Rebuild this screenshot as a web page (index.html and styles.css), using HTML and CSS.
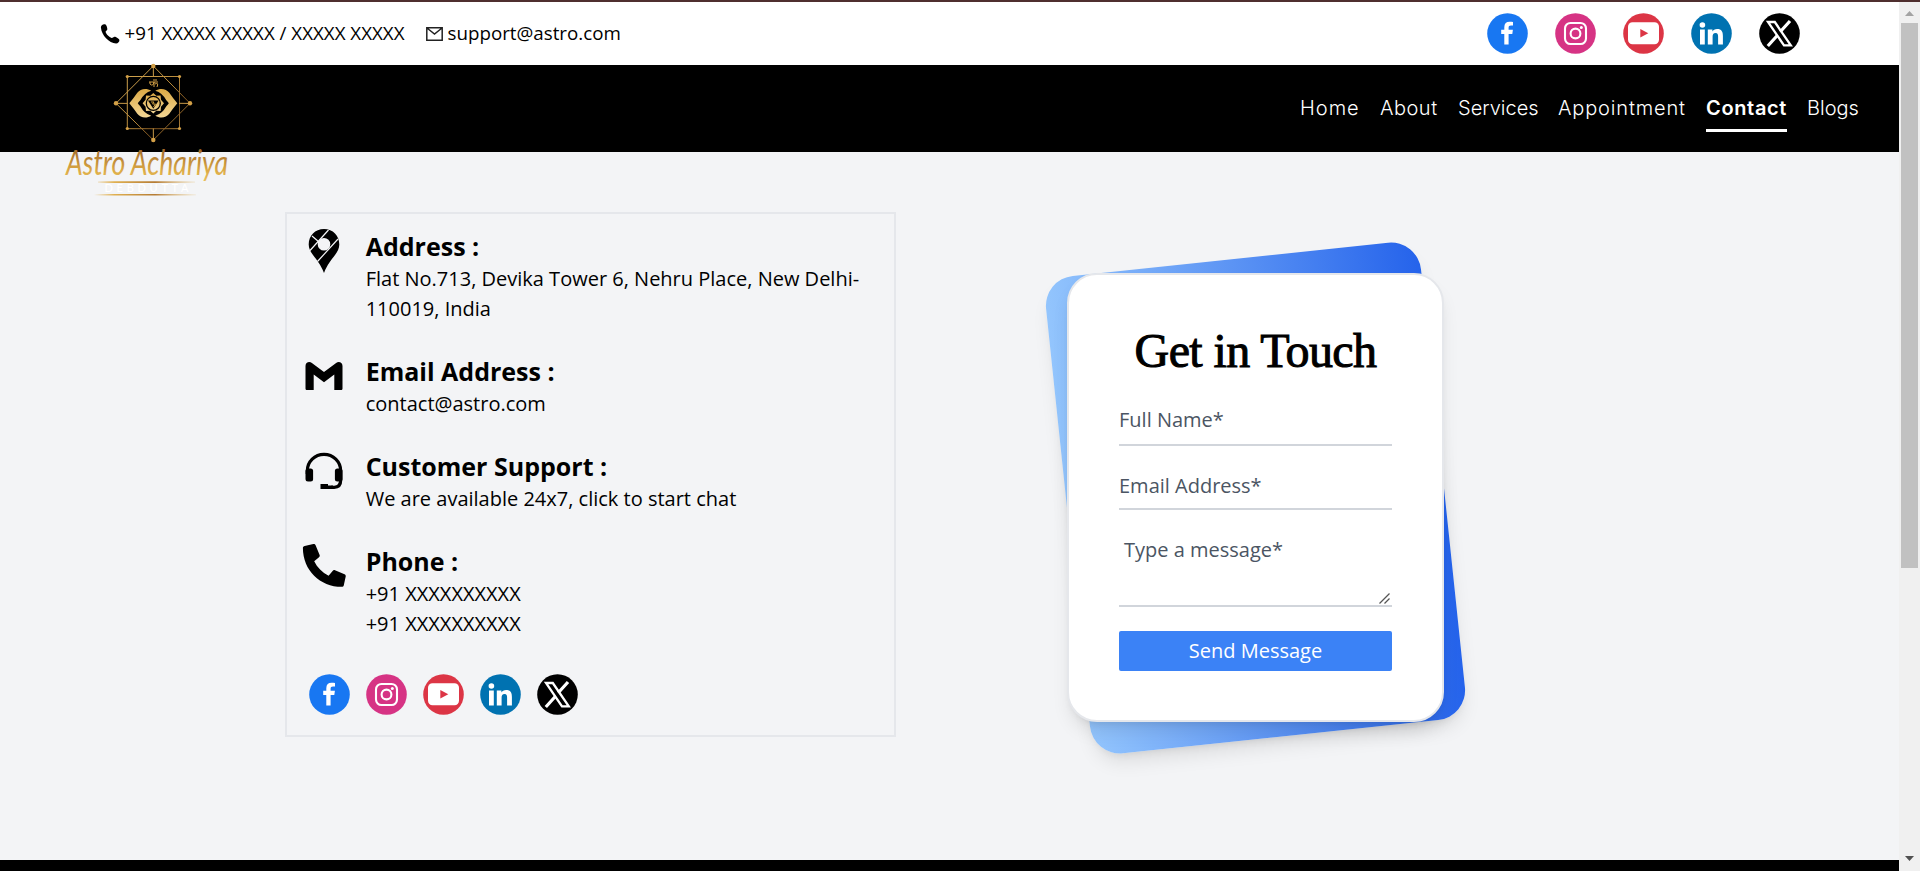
FILE: index.html
```html
<!DOCTYPE html>
<html lang="en">
<head>
<meta charset="utf-8">
<title>Contact - Astro Achariya</title>
<link rel="stylesheet" href="styles.css">
</head>
<body>
<svg class="defs" width="0" height="0">
  <symbol id="fb" viewBox="0 0 41 41"><circle cx="20.5" cy="20.5" r="20.3" fill="#1877f2"/><path d="M17.3 31.500V21h-3.100v-4.200h3.100v-2.600c0-3.600 2-5.400 5.200-5.400 1.400 0 2.500.1 3.500.3v3.500h-2c-1.700 0-2.400.8-2.400 2.200v2h4.300L25.300 21h-3.700v10.500z" fill="#fff"/></symbol>
  <symbol id="ig" viewBox="0 0 41 41"><circle cx="20.5" cy="20.5" r="20.3" fill="#d63384"/><g fill="none" stroke="#fff" stroke-width="2.1"><rect x="10" y="10" width="21" height="21" rx="5.5"/><circle cx="20.5" cy="20.5" r="4.9"/></g><circle cx="26.3" cy="14.6" r="1.5" fill="#fff"/></symbol>
  <symbol id="yt" viewBox="0 0 41 41"><circle cx="20.5" cy="20.5" r="20.3" fill="#dc3545"/><rect x="5" y="9.300" width="31" height="22" rx="4.500" fill="#fff"/><path d="M17.300 16v8.500l8-4.250z" fill="#dc3545"/></symbol>
  <symbol id="li" viewBox="0 0 41 41"><circle cx="20.5" cy="20.5" r="20.3" fill="#0072b1"/><g fill="#fff"><circle cx="11.400" cy="12" r="2.800"/><path d="M9 16.500h4.800v15H9zM16.800 16.500h4.600v2.100c.8-1.500 2.400-2.500 4.700-2.500 4.600 0 5.800 2.700 5.800 7v8.400h-4.800v-7.600c0-2-.2-3.900-2.500-3.900s-3 1.700-3 3.800v7.700h-4.800z"/></g></symbol>
  <symbol id="tx" viewBox="0 0 41 41"><circle cx="20.5" cy="20.5" r="20.3"/><path d="M9 9h6.800l16 23.400H25z" fill="none" stroke="#fff" stroke-width="2.300"/><path d="M31 8 21.300 18.800M18.500 22.200 8.800 33" stroke="#fff" stroke-width="3.200"/></symbol>
  <symbol id="phone" viewBox="0 0 44 44"><path d="M2.700 1.900 11.300.1c1-.2 1.900.3 2.300 1.200l4 9.600c.4.900.1 1.800-.6 2.400l-4.800 4c3 6.200 7.900 11.200 14.400 14.400l4-4.800c.6-.7 1.500-1 2.400-.6l9.500 4c.9.400 1.400 1.400 1.200 2.300l-1.900 8.600c-.2 1-1 1.600-2 1.600C18 42.800.9 26.200.9 3.900c0-1 .7-1.800 1.800-2z"/></symbol>
</svg>
<div class="accent"></div>
<div class="window">
  <div class="page">
    <div class="topbar">
      <div class="reach">
        <svg class="tel" viewBox="0 0 20 20"><path d="M1 4C.5 1.500 3 0 5 .2c1.500.2 2.600 4.300 2.300 5.300-.3 1.100-1.700 1.500-1.700 2.500.6 2.200 3.700 5.200 6 6 1 .2 1.800-1.200 2.900-1.300 1.500 0 4.700 2 4.900 3.200.3 1.500-1.500 3.500-3.300 3.500C9 19.400 1.500 11 1 4z"/></svg>
        <span class="tel-text">+91 XXXXX XXXXX / XXXXX XXXXX</span>
        <svg class="mail" viewBox="0 0 17 14"><path d="M.8.800h15.400v12.400H.8zM1 1l7.500 6L16 1" fill="none" stroke="#222" stroke-width="1.500"/></svg>
        <span class="mail-text">support@astro.com</span>
      </div>
      <div class="social">
        <svg><use href="#fb"/></svg><svg><use href="#ig"/></svg><svg><use href="#yt"/></svg><svg><use href="#li"/></svg><svg><use href="#tx"/></svg>
      </div>
    </div>
    <header class="nav">
      <svg class="logo" viewBox="60 60 180 140">
        <defs>
          <linearGradient id="gold" x1="0" y1="0" x2="0" y2="1"><stop offset="0" stop-color="#dba945"/><stop offset="1" stop-color="#f4d795"/></linearGradient>
          <linearGradient id="frame" x1="0" y1="0" x2="1" y2="1"><stop offset="0" stop-color="#d9ac55"/><stop offset=".5" stop-color="#b98b3c"/><stop offset=".7" stop-color="#80551f"/><stop offset="1" stop-color="#d9ac55"/></linearGradient>
          <linearGradient id="ink" gradientUnits="userSpaceOnUse" x1="0" y1="148" x2="0" y2="192"><stop offset="0" stop-color="#9c6428"/><stop offset=".5" stop-color="#dba945"/><stop offset=".75" stop-color="#e8bf5c"/><stop offset="1" stop-color="#f7ec9c"/></linearGradient>
          <linearGradient id="rule"><stop offset="0" stop-color="#e0b050" stop-opacity="0"/><stop offset=".2" stop-color="#e0b050"/><stop offset=".6" stop-color="#b57c35"/><stop offset="1" stop-color="#e0b050" stop-opacity=".1"/></linearGradient>
        </defs>
        <g fill="none" stroke="url(#frame)"><path d="M127.300 76.500h52.200v52.200h-52.200zM153.300 66 190 103.300 153.300 140 116 103.300z"/><path d="M116 103.300l11.500.1M179 103.300l11 .1M153.300 66l.1 10.500M153.300 128.500l.1 11.500" stroke="#c89a48"/></g>
        <g fill="#d3a047"><circle cx="153.300" cy="66" r="2.200"/><circle cx="153.300" cy="140" r="2.200"/><circle cx="116" cy="103.300" r="2.200"/><circle cx="190" cy="103.300" r="2.200"/><circle cx="127.300" cy="76.500" r="1.600"/><circle cx="179.500" cy="76.500" r="1.600"/><circle cx="127.300" cy="128.500" r="1.600"/><circle cx="179.500" cy="128.500" r="1.600"/></g>
        <path d="M149 82h9M150 82v2q3 3 4-2v5M155 84q4-2 2 3M153 80l4 0" fill="none" stroke="#d3a047"/>
        <path d="M129.300 103.300q5-6 8-10.500c3-4 9-5 14-2q-7 2-11 9.500-2 2-2.500 3 .5 1 2.500 3 4 7.500 11 9.500c-5 3-11 2-14-2q-3-4.500-8-10.500zM177.300 103.300q-5-6-8-10.500c-3-4-9-5-14-2q7 2 11 9.500 2 2 2.500 3-.5 1-2.500 3-4 7.500-11 9.500c5 3 11 2 14-2q3-4.500 8-10.500z" fill="url(#gold)"/>
        <path d="m153.300 93 3 2.800 4.300-.3.400 4.300 3 3.500-3 3.500-.4 4.300-4.300-.3-3 2.800-3-2.800-4.300.3-.4-4.300-3-3.500 3-3.500.4-4.300 4.300.3z" fill="url(#gold)"/>
        <circle cx="153.300" cy="103.300" r="7" fill="none" stroke="#000" stroke-width="1.300"/><path d="M148 100.500h10.600l-5.300 8.300z"/><path d="M151 102h3l-1.500 2h3l-2 3" fill="none" stroke="#dba945" stroke-width=".9"/>
        <text class="script" x="66" y="175" textLength="162" lengthAdjust="spacingAndGlyphs" fill="url(#ink)">Astro Achariya</text>
        <path d="M98 181.300h97v1.600H98zM94 193.900h102v1.600H94z" fill="url(#rule)"/>
        <text class="byline" x="104.500" y="192.300" textLength="84">DEBDUTTA</text>
      </svg>
      <nav class="links">
        <a class="home">Home</a><a class="about">About</a><a class="services">Services</a><a class="appointment">Appointment</a><a class="contact">Contact</a><a class="blogs">Blogs</a>
      </nav>
    </header>
    <main class="main">
      <section class="info">
        <div class="row address">
          <svg class="ico" viewBox="0 0 44 44"><path fill-rule="evenodd" d="M22 0c9 0 15.300 6.500 15.300 15.500 0 4-1.800 7-4.300 10.500-4 5.500-7.500 9-11 18-3.500-9-7-12.500-11-18-2.500-3.500-4.300-6.500-4.300-10.500C6.700 6.500 13 0 22 0zm0 9a6.300 6.300 0 1 0 0 12.600A6.300 6.300 0 0 0 22 9z"/><path d="M26.500 1 8 21.500M36 10 15.500 32.500M10 7l7 6" stroke="#f3f4f6" stroke-width="1.200" fill="none"/></svg>
          <div><h2>Address :</h2><p>Flat No.713, Devika Tower 6, Nehru Place, New Delhi-110019, India</p></div>
        </div>
        <div class="row email">
          <svg class="ico" viewBox="0 0 44 44"><path d="M3.500 34.500V12c0-3.500 3.700-5 6.400-3L22 18.100 34.100 9c2.700-2 6.400-.5 6.400 3v22.500c0 .9-.7 1.600-1.600 1.600h-6.600V20.500L22 28.300l-10.300-7.800v15.600H5.100c-.9 0-1.600-.7-1.600-1.600z"/></svg>
          <div><h2>Email Address :</h2><p>contact@astro.com</p></div>
        </div>
        <div class="row support">
          <svg class="ico" viewBox="0 0 44 44"><path d="M5.300 25v-3a16.700 16.700 0 0 1 33.400 0V31c0 5-2 7.300-6.500 7.300H29" fill="none" stroke="#000" stroke-width="3.200"/><rect x="3.500" y="19.500" width="7.600" height="13" rx="2.500"/><rect x="32.900" y="19.500" width="7.600" height="13" rx="2.500"/><path d="M18.500 35H26v1.600h5v3.300H18.500z"/></svg>
          <div><h2>Customer Support :</h2><p>We are available 24x7, click to start chat</p></div>
        </div>
        <div class="row call">
          <svg class="ico"><use href="#phone"/></svg>
          <div><h2>Phone :</h2><p>+91 XXXXXXXXXX<br>+91 XXXXXXXXXX</p></div>
        </div>
        <div class="social small">
          <svg><use href="#fb"/></svg><svg><use href="#ig"/></svg><svg><use href="#yt"/></svg><svg><use href="#li"/></svg><svg><use href="#tx"/></svg>
        </div>
      </section>
      <section class="touch">
        <div class="tilt"></div>
        <form class="card">
          <h1>Get in Touch</h1>
          <input placeholder="Full Name*">
          <input class="mail-field" placeholder="Email Address*">
          <div class="message"><textarea placeholder="Type a message*"></textarea><svg class="grip" viewBox="0 0 11 11"><path d="M.5 10.500l10-10M5.500 10.500l5-5" stroke="#555" stroke-width="1.300"/></svg></div>
          <button type="button">Send Message</button>
        </form>
      </section>
    </main>
    <footer class="footer"></footer>
  </div>
  <div class="scroll">
    <svg viewBox="0 0 9 5"><path d="M0 5h9L4.500 0z" fill="#a3a3a3"/></svg>
    <div class="thumb"></div>
    <svg class="down" viewBox="0 0 9 5"><path d="M0 0h9L4.500 5z" fill="#505050"/></svg>
  </div>
</div>
</body>
</html>
```
FILE: styles.css
```css
* { box-sizing: border-box; }
body { margin: 0; height: 871px; overflow: hidden; font-family: "Open Sans", sans-serif; font-size: 20px; line-height: 30px; color: #000; background: #f3f4f6; }
h1, h2, p { margin: 0; }
svg { display: block; flex: none; }
.defs { position: absolute; }
.accent { height: 2px; background: #4f2f2f; }
.window { display: flex; height: 869px; }
.page { width: 1899px; display: flex; flex-direction: column; }

.topbar { height: 63px; padding: 0 99.5px; background: #fff; display: flex; justify-content: space-between; align-items: center; }
.reach { display: flex; align-items: center; font-size: 18.75px; white-space: nowrap; }
.reach span { padding-bottom: 2px; }
.tel { width: 20px; height: 20px; }
.tel-text { width: 281px; margin-left: 5px; }
.mail { width: 17px; height: 14px; margin-left: 20px; }
.mail-text { margin-left: 5px; }
.social { display: flex; gap: 27px; }
.social svg { width: 41px; height: 41px; }

.nav { height: 87px; padding: 0 39px 0 60px; background: #000; display: flex; justify-content: space-between; align-items: flex-start; }
.logo { width: 180px; height: 140px; margin-top: -5px; position: relative; overflow: visible; }
.script { font-family: Lato, sans-serif; font-style: italic; font-size: 34px; font-weight: 400; }
.byline { font-family: Lato, sans-serif; font-size: 11px; fill: #fff; }
.links { display: flex; gap: 20px; margin-top: 25px; font-family: Inter, sans-serif; font-weight: 300; line-height: 36px; color: #fff; white-space: nowrap; }
.links a { height: 42px; }
.home { width: 60px; letter-spacing: 1px; }
.about { width: 58px; letter-spacing: .5px; }
.services { width: 80px; }
.appointment { width: 128px; letter-spacing: .85px; }
.contact { width: 81px; border-bottom: 3px solid #fff; font-weight: 600; letter-spacing: .65px; }
.blogs { width: 53px; }

.main { height: 708px; padding: 60px 0 0 285px; display: flex; align-items: flex-start; }
.info { width: 611px; height: 525px; border: 2px solid #e5e7eb; padding: 15px 14px 14px 14.7px; }
.row { display: flex; gap: 20px; align-items: flex-start; }
.row h2 { font-size: 25px; line-height: 35px; font-weight: 700; }
.ico { width: 44px; height: 44px; }
.address { height: 125px; }
.email, .support { height: 95px; }
.call { height: 130px; }
.small { gap: 16.2px; margin-left: 7px; }

.touch { position: relative; width: 377px; height: 449px; margin: 61px 0 0 171px; }
.tilt { position: absolute; inset: -15.5px 0; border-radius: 30px; background: linear-gradient(90deg, #93c5fd, #2563eb); transform: rotate(-6deg); box-shadow: 0 12px 19px -4px rgba(0,0,0,.1), 0 5px 8px -5px rgba(0,0,0,.1); }
.card { position: relative; width: 377px; height: 449px; padding: 51px 50px 49px; background: #fff; border: 2px solid #e5e7eb; border-radius: 30px; display: flex; flex-direction: column; box-shadow: 0 12px 19px -4px rgba(0,0,0,.1), 0 5px 8px -5px rgba(0,0,0,.1); }
.card h1 { font-family: "Liberation Serif", serif; font-size: 48px; line-height: 50px; font-weight: 400; text-align: center; letter-spacing: -.6px; -webkit-text-stroke: 1px #000; white-space: nowrap; }
input, textarea { font: inherit; border: 0; border-bottom: 2px solid #d1d5db; background: none; padding: 0; outline: 0; border-radius: 0; width: 273px; }
input::placeholder, textarea::placeholder { color: #4b5563; opacity: 1; }
input { height: 50px; margin-top: 20px; padding-bottom: 0; }
.mail-field { margin-top: 15px; padding-top: 2px; }
.message { position: relative; height: 81px; margin-top: 16px; }
textarea { display: block; height: 81px; resize: none; padding: 9px 5px; overflow: hidden; }
.grip { position: absolute; right: 2px; bottom: 3px; width: 11px; height: 11px; }
button { font: inherit; height: 40px; margin-top: 24px; border: 0; border-radius: 2px; background: #3b82f6; color: #fff; padding: 0; }
.footer { flex: 1; background: #000; }
.scroll { flex: 1; background: #f0f0f0; display: flex; flex-direction: column; align-items: center; padding: 9px 0 10px; }
.scroll svg { width: 9px; height: 5px; }
.thumb { width: 17px; height: 545px; margin-top: 7px; background: #c1c1c1; }
.down { margin-top: auto; }
```
